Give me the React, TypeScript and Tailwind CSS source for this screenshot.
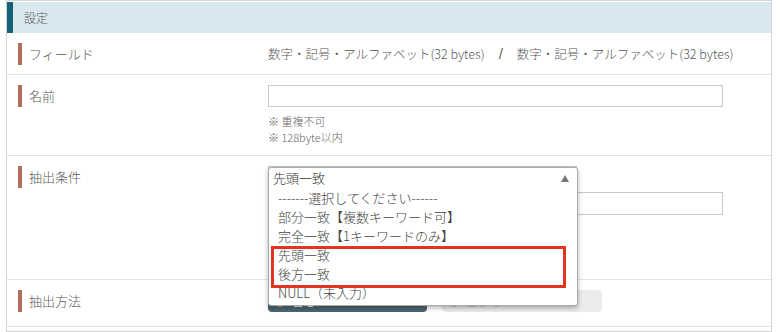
import React from 'react';

const jp = { fontFamily: '"Noto Sans CJK JP", "Noto Sans", sans-serif' };

function Label({ text }: { text: string }) {
  return (
    <div className="w-[261px] shrink-0 flex items-start pl-[11px]">
      <div className="flex items-center h-[22px]">
        <span className="w-[4px] h-[22px] bg-[#b0705e] mr-[7px]"></span>
        <span className="text-[13px] text-[#5a5a5a] font-light">{text}</span>
      </div>
    </div>
  );
}

const OPTIONS = [
  '-------選択してください------',
  '部分一致【複数キーワード可】',
  '完全一致【1キーワードのみ】',
  '先頭一致',
  '後方一致',
  'NULL（未入力）',
];

export default function App() {
  return (
    <div className="w-[780px] h-[332px] bg-white overflow-hidden" style={jp}>
      <div className="relative ml-[6px] w-[766px] h-[332px] border border-[#d4d4d4]">
        <div className="h-[31px] mt-[1px] bg-[#d9e8ef] border-l-[6px] border-[#17607a] flex items-center pl-[11px] text-[12px] text-[#555] font-light">
          設定
        </div>

        {/* フィールド */}
        <div className="flex h-[42px] pt-[10px] border-b border-[#e3e3e3]">
          <Label text="フィールド" />
          <div className="flex items-center h-[22px] text-[12.5px] text-[#555] font-light whitespace-nowrap">
            <span>数字・記号・アルファベット(32 bytes)</span>
            <span className="mx-[14px] text-[15px] text-[#666]" style={{ fontFamily: '"Liberation Sans", sans-serif' }}>/</span>
            <span>数字・記号・アルファベット(32 bytes)</span>
          </div>
        </div>

        {/* 名前 */}
        <div className="flex h-[81px] pt-[10px] border-b border-[#e3e3e3]">
          <Label text="名前" />
          <div className="flex flex-col font-light">
            <div className="w-[455px] h-[22px] border border-[#c8c8c8] bg-white"></div>
            <div className="mt-[6px] text-[11px] leading-[16px] text-[#666]">※ 重複不可</div>
            <div className="text-[11px] leading-[16px] text-[#666]">※ 128byte以内</div>
          </div>
        </div>

        {/* 抽出条件 */}
        <div className="flex h-[124px] pt-[10px] border-b border-[#e3e3e3]">
          <Label text="抽出条件" />
          <div className="flex flex-col">
            <div className="w-[309px] h-[22px] border border-[#c8c8c8] bg-white"></div>
            <div className="mt-[4px] w-[455px] h-[23px] border border-[#c8c8c8] bg-white"></div>
          </div>
        </div>

        {/* 抽出方法 */}
        <div className="flex h-[47px] pt-[10px] border-b border-[#e3e3e3]">
          <Label text="抽出方法" />
          <div className="flex gap-[15px]">
            <div className="w-[159px] h-[22px] rounded-sm bg-[#4c6572] flex items-center pl-[6px] gap-[6px] text-[12px] text-white">
              <span className="w-[12px] h-[12px] rounded-full bg-[#e9a23b]"></span>
              含む
            </div>
            <div className="w-[160px] h-[22px] rounded-sm bg-[#ececec] flex items-center pl-[6px] gap-[6px] text-[12px] text-[#bbb]">
              <span className="w-[12px] h-[12px] rounded-full border border-[#bbb] bg-white"></span>
              含まない
            </div>
          </div>
        </div>

        {/* open select */}
        <div className="absolute left-[261px] top-[166px] w-[310px] h-[139px] bg-white border border-[#a9a9a9] rounded-[3px] shadow-[0_2px_5px_rgba(0,0,0,0.3)] font-light">
          <div className="flex items-center justify-between h-[20px] pl-[4px] pr-[8px] text-[13px] text-[#333]">
            <span>先頭一致</span>
            <span className="w-0 h-0 border-l-[4px] border-r-[4px] border-b-[7px] border-l-transparent border-r-transparent border-b-[#777]"></span>
          </div>
          <div className="flex flex-col pl-[9px] text-[13px] text-[#444]">
            {OPTIONS.map((o) => (
              <div key={o} className="h-[19px] leading-[19px] whitespace-nowrap">
                {o}
              </div>
            ))}
          </div>
        </div>

        {/* highlight */}
        <div className="absolute left-[264px] top-[245px] w-[295px] h-[42px] border-[3px] border-[#e2341f]"></div>
      </div>
    </div>
  );
}
